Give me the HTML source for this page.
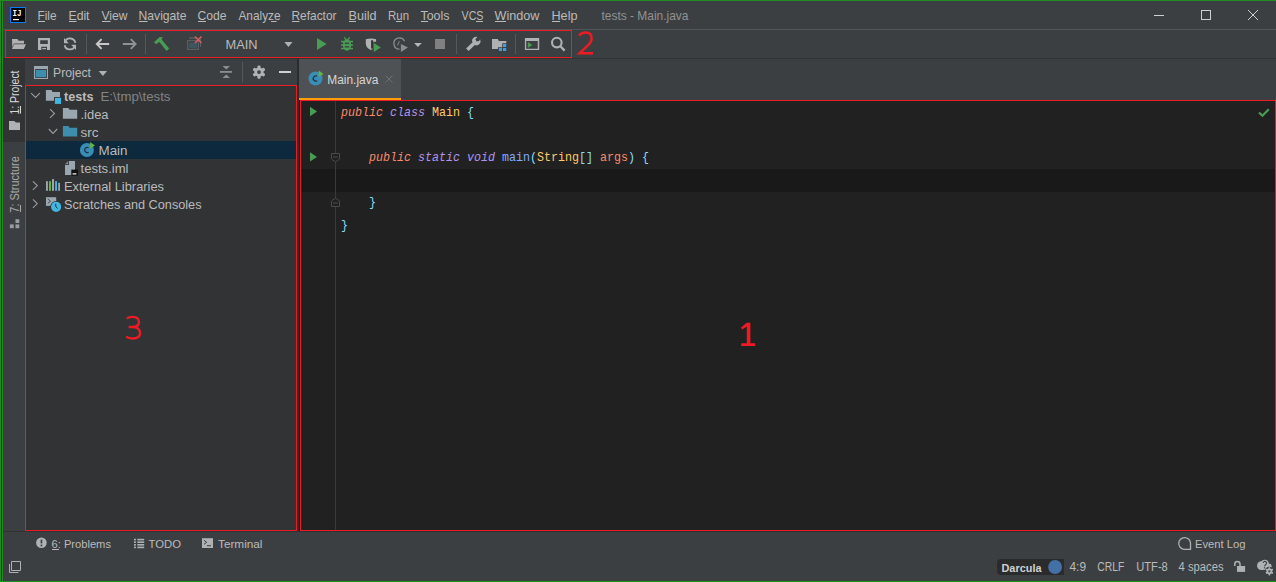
<!DOCTYPE html>
<html><head><meta charset="utf-8">
<style>
*{margin:0;padding:0;box-sizing:border-box}
html,body{width:1276px;height:582px;overflow:hidden;background:#3c3f41;font-family:"Liberation Sans",sans-serif}
.a{position:absolute}
svg{position:absolute;left:0;top:0}
</style></head><body>
<div class="a" style="left:0px;top:0px;width:1276px;height:1px;background:#228b22;"></div>
<div class="a" style="left:0px;top:581px;width:1276px;height:1px;background:#228b22;"></div>
<div class="a" style="left:0px;top:0px;width:1px;height:582px;background:#228b22;"></div>
<div class="a" style="left:1px;top:1px;width:1px;height:580px;background:#2f3133;"></div>
<div class="a" style="left:2px;top:0px;width:1px;height:582px;background:#228b22;"></div>
<div class="a" style="left:3px;top:29px;width:1273px;height:1px;background:#515658;"></div>
<div class="a" style="left:3px;top:58px;width:1273px;height:1px;background:#323232;"></div>
<div class="a" style="left:3px;top:59px;width:22px;height:472px;background:#3c3f41;"></div>
<div class="a" style="left:3px;top:59px;width:22px;height:83px;background:#313335;"></div>
<div class="a" style="left:25px;top:85px;width:272px;height:446px;background:#313335;"></div>
<div class="a" style="left:26px;top:141px;width:270px;height:18px;background:#0d293e;"></div>
<div class="a" style="left:297px;top:59px;width:2px;height:472px;background:#2b2b2b;"></div>
<div class="a" style="left:299px;top:59px;width:102px;height:39px;background:#4e5254;"></div>
<div class="a" style="left:299px;top:98px;width:102px;height:2px;background:#fc9d0a;"></div>
<div class="a" style="left:299px;top:100px;width:977px;height:431px;background:#212121;"></div>
<div class="a" style="left:300px;top:169px;width:976px;height:23px;background:#191919;"></div>
<div class="a" style="left:335px;top:100px;width:1px;height:431px;background:#3a3a3a;"></div>
<div class="a" style="left:3px;top:531px;width:1273px;height:1px;background:#323232;"></div>
<div class="a" style="left:997px;top:559px;width:67px;height:16px;background:#2b2b2b;border-radius:4px 0 0 4px"></div>
<svg width="1276" height="582" viewBox="0 0 1276 582">
<!-- IJ logo -->
<rect x="10" y="7" width="16" height="16" fill="#087cfa"/>
<rect x="11" y="8" width="14" height="14" fill="#000"/>
<text x="12.6" y="16.2" font-family="Liberation Mono" font-weight="bold" font-size="9" fill="#fff" textLength="9" lengthAdjust="spacingAndGlyphs">IJ</text>
<rect x="13" y="19" width="6" height="1.2" fill="#fff"/>
<!-- menu underlines -->
<g fill="#bbbbbb">
<rect x="38" y="21" width="7" height="1"/>
<rect x="69" y="21" width="7.5" height="1"/>
<rect x="102" y="21" width="8.5" height="1"/>
<rect x="139" y="21" width="8.5" height="1"/>
<rect x="198" y="21" width="8" height="1"/>
<rect x="271" y="21" width="5.5" height="1"/>
<rect x="292" y="21" width="7.5" height="1"/>
<rect x="349" y="21" width="7" height="1"/>
<rect x="396" y="21" width="6" height="1"/>
<rect x="421" y="21" width="7" height="1"/>
<rect x="476" y="21" width="7" height="1"/>
<rect x="495" y="21" width="11" height="1"/>
<rect x="552" y="21" width="8" height="1"/>
</g>
<!-- window controls -->
<g stroke="#cfcfcf" stroke-width="1" fill="none">
<line x1="1154" y1="15.5" x2="1164" y2="15.5"/>
<rect x="1201.5" y="10.5" width="9" height="9"/>
<line x1="1248" y1="10" x2="1258" y2="20"/>
<line x1="1258" y1="10" x2="1248" y2="20"/>
</g>
<!-- toolbar icons -->
<g fill="#afb1b3">
<!-- open folder -->
<path d="M12 39 H17.5 L18.5 40.8 H24 V43.5 H14 L12.3 47.5 Z"/>
<path d="M14.2 44.2 H26 L23.8 49 H12 Z"/>
<!-- save -->
<path fill-rule="evenodd" d="M38 38 H50 V50 H38 Z M40.2 40.2 V44 H47.8 V40.2 Z M41.3 46.7 V50 H47 V46.7 Z"/>
<rect x="42.3" y="48" width="3.8" height="1.2"/>
</g>
<!-- sync -->
<g fill="none" stroke="#afb1b3" stroke-width="1.8">
<path d="M65 42.3 A5.3 5.3 0 0 1 75.3 42.8"/>
<path d="M75 45.6 A5.3 5.3 0 0 1 64.7 45.2"/>
</g>
<g fill="#afb1b3">
<path d="M64 38 L64 43.2 L68.8 43.2 Z"/>
<path d="M76 50 L76 44.8 L71.2 44.8 Z"/>
</g>
<!-- separators -->
<g fill="#55585a">
<rect x="86" y="34" width="1" height="20"/>
<rect x="145" y="34" width="1" height="20"/>
<rect x="456" y="34" width="1" height="20"/>
<rect x="515" y="34" width="1" height="20"/>
<rect x="242" y="62" width="1" height="20"/>
</g>
<!-- back / forward -->
<g fill="none" stroke-width="1.9" stroke-linecap="butt">
<path d="M96.5 44 H109.2 M101.6 39.2 L96.8 44 L101.6 48.8" stroke="#c8c8c8"/>
<path d="M122.8 44 H135.5 M130.8 39.2 L135.6 44 L130.8 48.8" stroke="#8f9193"/>
</g>
<!-- hammer -->
<g fill="#499c54">
<path d="M154 42.3 L159.7 37 L163 37.2 L161.5 39.6 L163 41 L160.8 43.2 L159.2 41.7 L156.3 44.3 Z"/>
<path d="M159.2 41.7 L161.5 39.6 L169.2 48.4 L166.6 50.9 Z"/>
</g>
<!-- run config disabled -->
<g>
<rect x="187.6" y="40.6" width="10.8" height="8.8" fill="none" stroke="#5a5e60" stroke-width="1.2"/>
<rect x="189.2" y="42.6" width="7.7" height="5.3" fill="#3e5661"/>
<rect x="189" y="37.2" width="7" height="1.6" fill="#5a5e60"/>
<rect x="200" y="39" width="1" height="8" fill="#5a5e60"/>
<path d="M195 36.5 L201.5 43 M201.5 36.5 L195 43" stroke="#db5c5c" stroke-width="1.6"/>
</g>
<!-- MAIN dropdown -->
<path d="M284.4 42 H292.5 L288.45 47 Z" fill="#afb1b3"/>
<!-- run -->
<path d="M317 38 V50.1 L326.6 43.9 Z" fill="#499c54"/>
<!-- debug -->
<g fill="#499c54">
<ellipse cx="347" cy="45" rx="4.2" ry="5.8"/>
<rect x="341" y="40.8" width="12" height="1.5"/>
<rect x="341" y="44.3" width="12" height="1.5"/>
<rect x="341" y="47.8" width="12" height="1.5"/>
<path d="M344.3 37.3 L346.3 40 M349.7 37.3 L347.7 40" stroke="#499c54" stroke-width="1.3"/>
</g>
<g fill="#3c3f41">
<rect x="344.8" y="42.6" width="4.4" height="1.3"/>
<rect x="344.8" y="46.2" width="4.4" height="1.3"/>
</g>
<!-- coverage -->
<path d="M365.8 39.3 Q371 37.9 376.1 39.3 V41.8 H373.2 V48.4 Q372 49.4 370.8 50.1 Q365.8 47.8 365.8 43.6 Z" fill="#afb1b3"/>
<rect x="371.1" y="40.3" width="2" height="8.3" fill="#2e3033"/>
<path d="M373.8 43 V52 L380.8 47.4 Z" fill="#499c54"/>
<!-- profiler -->
<path d="M404.6 41.3 A5.6 5.6 0 1 0 399.5 49.2" fill="none" stroke="#8c8c8c" stroke-width="1.3"/>
<path d="M399.3 41.3 L397.6 45.3" stroke="#8c8c8c" stroke-width="1"/>
<path d="M400.9 44.1 V51.9 L408 47.6 Z" fill="#8c8c8c"/>
<path d="M414.1 42.9 H421.9 L417.9 46.9 Z" fill="#b5b5b5"/>
<!-- stop -->
<rect x="435" y="39" width="10" height="10" fill="#7f8183"/>
<!-- wrench -->
<g fill="#afb1b3">
<path d="M466.1 48.6 L472.8 41.9 L475.3 44.4 L468.6 51.1 Z"/>
<path fill-rule="evenodd" d="M472 41.2 A4.2 4.2 0 0 1 477.4 36.9 L475.3 39.3 L476.6 41.6 L479.1 40.9 L480.1 39.3 A4.2 4.2 0 0 1 474.9 45.1 Z"/>
</g>
<!-- project structure -->
<path d="M492 39 H497.8 L498.8 41 H506.3 V43.2 H502.2 V47.2 H498 V48.9 H492 Z" fill="#afb1b3"/>
<g fill="#3d9ee4">
<rect x="503" y="44" width="3.2" height="3"/>
<rect x="498.9" y="48" width="3.1" height="3"/>
<rect x="503" y="48" width="3.2" height="3"/>
</g>
<!-- terminal window -->
<path fill-rule="evenodd" d="M524.9 37.9 H539.2 V50.1 H524.9 Z M526.2 41 V48.8 H537.8 V41 Z" fill="#afb1b3"/>
<path d="M527.8 42 V47.9 L532.3 45 Z" fill="#499c54"/>
<!-- search -->
<circle cx="556.8" cy="42.6" r="4.8" fill="none" stroke="#afb1b3" stroke-width="2.1"/>
<path d="M560.4 46.3 L564.6 50.6" stroke="#afb1b3" stroke-width="2.3"/>

<!-- project header -->
<path fill-rule="evenodd" d="M34 66 H48 V79 H34 Z M35.2 69 V78 H47 V69 Z" fill="#9aa7b0"/>
<rect x="36" y="70" width="10.2" height="7.2" fill="#3d8ead"/>
<path d="M98.7 71 H107.1 L102.9 75.9 Z" fill="#afb1b3"/>
<!-- collapse all -->
<g fill="#8c8e90">
<path d="M222.5 66 H230 L226.25 69.5 Z"/>
<rect x="220" y="71" width="12" height="1.8"/>
<path d="M222.5 78 H230 L226.25 74.5 Z"/>
</g>
<!-- gear -->
<g fill="#afb1b3">
<circle cx="259" cy="72.1" r="4.6"/>
<rect x="257.4" y="65.5" width="3.2" height="13.2" rx="1.2"/>
<rect x="257.4" y="65.5" width="3.2" height="13.2" rx="1.2" transform="rotate(60 259 72.1)"/>
<rect x="257.4" y="65.5" width="3.2" height="13.2" rx="1.2" transform="rotate(120 259 72.1)"/>
</g>
<circle cx="259" cy="72.1" r="1.9" fill="#3c3f41"/>
<rect x="279" y="71" width="12" height="2" fill="#d0d0d0"/>

<!-- tree -->
<g fill="none" stroke="#9a9da0" stroke-width="1.1">
<path d="M31.1 93.1 L35.5 97.4 L39.9 93.1"/>
<path d="M50 109.2 L54.5 113.5 L50 117.8"/>
<path d="M48.8 129 L53 133.4 L57.2 129"/>
<path d="M32.9 181.4 L37.3 185.6 L32.9 189.8"/>
<path d="M32.9 199.4 L37.3 203.6 L32.9 207.8"/>
</g>
<!-- module folder -->
<path d="M45.9 90 H51.5 L52.5 91.9 H60 V97 H54 V100.8 H45.9 Z" fill="#9aa7b0"/>
<rect x="54.4" y="97.3" width="7.2" height="7.1" fill="#313335"/>
<rect x="54.9" y="97.8" width="6.2" height="6.1" fill="#40b6e0"/>
<!-- .idea folder -->
<path d="M62.9 108 H68.5 L69.5 109.8 H77.2 V118.8 H62.9 Z" fill="#9aa7b0"/>
<!-- src folder -->
<path d="M62.9 126 H68.5 L69.5 127.8 H77.2 V136.6 H62.9 Z" fill="#3d8ead"/>
<!-- Main class icon -->
<circle cx="86.9" cy="150" r="7" fill="#3a8db5"/>
<path d="M88.6 147.8 A2.6 2.6 0 1 0 88.6 152.2" fill="none" stroke="#1e3344" stroke-width="1.3"/>
<path d="M90.1 142.1 L95 145.5 L90.1 148.6 Z" fill="#62b543"/>
<!-- tests.iml -->
<path d="M69 161 H75 V175 H65 V165 H69 Z" fill="#9aa7b0"/>
<path d="M65 164.2 L68.2 161 V164.2 Z" fill="#9aa7b0" opacity="0.75"/>
<rect x="71.3" y="169.6" width="6.7" height="6.1" fill="#111"/>
<rect x="72.6" y="173.3" width="3.8" height="1.2" fill="#fff"/>
<!-- external libraries -->
<rect x="46" y="181.2" width="1.9" height="9.6" fill="#9aa7b0"/>
<rect x="49" y="181.2" width="2" height="9.6" fill="#62b543"/>
<rect x="52" y="179.1" width="2" height="11.7" fill="#9aa7b0"/>
<rect x="55.1" y="181.2" width="1.9" height="9.6" fill="#40b6e0"/>
<rect x="58.2" y="182.9" width="1.8" height="7.9" fill="#9aa7b0"/>
<!-- scratches -->
<rect x="46" y="197.2" width="10.2" height="8.7" fill="#9aa7b0"/>
<path d="M47.8 199 L50.5 201.2 L47.8 203.4" fill="none" stroke="#3c3f41" stroke-width="0.9"/>
<circle cx="56.1" cy="206.8" r="5.9" fill="#313335"/>
<circle cx="56.1" cy="206.8" r="5.1" fill="#40b6e0"/>
<path d="M55.6 203.8 L56 206.8 L57.6 208.6" fill="none" stroke="#1e3344" stroke-width="1"/>

<!-- editor tab icon -->
<circle cx="315.5" cy="78.5" r="7" fill="#3a8db5"/>
<path d="M317.2 76.3 A2.6 2.6 0 1 0 317.2 80.7" fill="none" stroke="#1e3344" stroke-width="1.3"/>
<path d="M318.7 70.6 L323.6 74 L318.7 77.1 Z" fill="#62b543"/>
<path d="M385.5 75.5 L392.5 82.5 M392.5 75.5 L385.5 82.5" stroke="#6e7173" stroke-width="1"/>

<!-- gutter -->
<g fill="#499c54">
<path d="M310 106.8 V116.2 L317 111.5 Z"/>
<path d="M310 152.2 V161.6 L317 156.9 Z"/>
</g>
<g fill="#212121" stroke="#4a4a4a" stroke-width="1">
<path d="M331.5 153.5 H339.5 V159 L335.5 162 L331.5 159 Z"/>
<path d="M331.5 206.5 H339.5 V201 L335.5 198 L331.5 201 Z"/>
</g>
<g stroke="#4a4a4a" stroke-width="1">
<line x1="333" y1="157" x2="338" y2="157"/>
<line x1="333" y1="203" x2="338" y2="203"/>
</g>
<!-- checkmark -->
<path d="M1259 112.5 L1262.4 115.8 L1268.8 109.2" fill="none" stroke="#499c54" stroke-width="2.2"/>

<!-- left strip vertical tabs -->
<text transform="translate(19.4 114.5) rotate(-90)" font-family="Liberation Sans" font-size="12" fill="#d8d8d8" textLength="44" lengthAdjust="spacingAndGlyphs">1: Project</text>
<rect x="20" y="106" width="1" height="7.5" fill="#d8d8d8"/>
<path d="M9 121 H14.3 L15.8 122.6 H20 V130 H9 Z" fill="#afb1b3"/>
<text transform="translate(19.2 212.7) rotate(-90)" font-family="Liberation Sans" font-size="12" fill="#a8a8a8" textLength="56.5" lengthAdjust="spacingAndGlyphs">7: Structure</text>
<rect x="20" y="205" width="1" height="7" fill="#a8a8a8"/>
<g fill="#9a9da0">
<rect x="15.5" y="219.2" width="3.8" height="3.8"/>
<rect x="9.9" y="224.4" width="3.8" height="3.8"/>
<rect x="15.5" y="224.4" width="3.8" height="3.8"/>
</g>

<!-- bottom bar icons -->
<circle cx="41.4" cy="542.8" r="5.3" fill="#afb1b3"/>
<rect x="40.6" y="539.6" width="1.7" height="3.8" fill="#3c3f41"/>
<rect x="40.6" y="544.6" width="1.7" height="1.7" fill="#3c3f41"/>
<rect x="52" y="549" width="7" height="1" fill="#bbbbbb"/>
<g fill="#afb1b3">
<rect x="134" y="538.8" width="1.9" height="1.6"/><rect x="137.3" y="538.8" width="6.9" height="1.6"/>
<rect x="134" y="541.4" width="1.9" height="1.6"/><rect x="137.3" y="541.4" width="6.9" height="1.6"/>
<rect x="134" y="544" width="1.9" height="1.6"/><rect x="137.3" y="544" width="6.9" height="1.6"/>
<rect x="134" y="546.6" width="1.9" height="1.6"/><rect x="137.3" y="546.6" width="6.9" height="1.6"/>
</g>
<rect x="202" y="538.2" width="11" height="9.8" fill="#afb1b3"/>
<path d="M204 540.3 L206.6 542.3 L204 544.3" fill="none" stroke="#3c3f41" stroke-width="1"/>
<rect x="207" y="545.2" width="4" height="1" fill="#3c3f41"/>
<path d="M1190.5 549.3 H1183.9 A5.9 5.9 0 1 1 1190.5 542.9 Z" fill="none" stroke="#afb1b3" stroke-width="1.3"/>

<!-- status bar -->
<path d="M9.5 564 V572.5 H18.5 M11.5 561.5 H20.5 V570.5 H11.5 Z" fill="none" stroke="#afb1b3" stroke-width="1"/>
<circle cx="1055.1" cy="567" r="6.9" fill="#4470a8"/>
<rect x="1237" y="566" width="8.1" height="5.9" fill="#afb1b3"/>
<path d="M1234.8 566 V564 A2.6 2.6 0 0 1 1240 564 V566" fill="none" stroke="#afb1b3" stroke-width="1.5"/>
<g fill="#afb1b3">
<circle cx="1261.3" cy="565.6" r="4.3"/>
<circle cx="1264.8" cy="563.6" r="3.9"/>
<circle cx="1268.6" cy="566.6" r="3.1"/>
<rect x="1261.3" y="566" width="8" height="3.9"/>
</g>
<path d="M1263.2 562.8 A1.7 1.7 0 1 1 1265.6 564.6 L1264.4 566.3" fill="none" stroke="#3c3f41" stroke-width="1.1"/>
<rect x="1263.9" y="567.2" width="1.2" height="1.2" fill="#3c3f41"/>
<circle cx="1269.4" cy="571.3" r="4.6" fill="#3c3f41"/>
<g fill="#afb1b3">
<circle cx="1269.4" cy="571.3" r="2.9"/>
<rect x="1268.5" y="567.2" width="1.8" height="8.2" rx="0.6"/>
<rect x="1268.5" y="567.2" width="1.8" height="8.2" rx="0.6" transform="rotate(60 1269.4 571.3)"/>
<rect x="1268.5" y="567.2" width="1.8" height="8.2" rx="0.6" transform="rotate(120 1269.4 571.3)"/>
</g>
<circle cx="1269.4" cy="571.3" r="1.1" fill="#3c3f41"/>

<text x="37.5" y="20" font-family="Liberation Sans" font-size="13" fill="#bbbbbb" font-weight="normal" font-style="normal" textLength="19" lengthAdjust="spacingAndGlyphs" >File</text>
<text x="68.5" y="20" font-family="Liberation Sans" font-size="13" fill="#bbbbbb" font-weight="normal" font-style="normal" textLength="21" lengthAdjust="spacingAndGlyphs" >Edit</text>
<text x="101.5" y="20" font-family="Liberation Sans" font-size="13" fill="#bbbbbb" font-weight="normal" font-style="normal" textLength="26" lengthAdjust="spacingAndGlyphs" >View</text>
<text x="138.5" y="20" font-family="Liberation Sans" font-size="13" fill="#bbbbbb" font-weight="normal" font-style="normal" textLength="48" lengthAdjust="spacingAndGlyphs" >Navigate</text>
<text x="197.5" y="20" font-family="Liberation Sans" font-size="13" fill="#bbbbbb" font-weight="normal" font-style="normal" textLength="29" lengthAdjust="spacingAndGlyphs" >Code</text>
<text x="238.5" y="20" font-family="Liberation Sans" font-size="13" fill="#bbbbbb" font-weight="normal" font-style="normal" textLength="42" lengthAdjust="spacingAndGlyphs" >Analyze</text>
<text x="291.5" y="20" font-family="Liberation Sans" font-size="13" fill="#bbbbbb" font-weight="normal" font-style="normal" textLength="45" lengthAdjust="spacingAndGlyphs" >Refactor</text>
<text x="348.5" y="20" font-family="Liberation Sans" font-size="13" fill="#bbbbbb" font-weight="normal" font-style="normal" textLength="28" lengthAdjust="spacingAndGlyphs" >Build</text>
<text x="388.1" y="20" font-family="Liberation Sans" font-size="13" fill="#bbbbbb" font-weight="normal" font-style="normal" textLength="21" lengthAdjust="spacingAndGlyphs" >Run</text>
<text x="420.5" y="20" font-family="Liberation Sans" font-size="13" fill="#bbbbbb" font-weight="normal" font-style="normal" textLength="29" lengthAdjust="spacingAndGlyphs" >Tools</text>
<text x="461.5" y="20" font-family="Liberation Sans" font-size="13" fill="#bbbbbb" font-weight="normal" font-style="normal" textLength="22" lengthAdjust="spacingAndGlyphs" >VCS</text>
<text x="494.5" y="20" font-family="Liberation Sans" font-size="13" fill="#bbbbbb" font-weight="normal" font-style="normal" textLength="45" lengthAdjust="spacingAndGlyphs" >Window</text>
<text x="551.5" y="20" font-family="Liberation Sans" font-size="13" fill="#bbbbbb" font-weight="normal" font-style="normal" textLength="26" lengthAdjust="spacingAndGlyphs" >Help</text>
<text x="601.5" y="20" font-family="Liberation Sans" font-size="13" fill="#8f9193" font-weight="normal" font-style="normal" textLength="87" lengthAdjust="spacingAndGlyphs" >tests - Main.java</text>
<text x="225.5" y="49" font-family="Liberation Sans" font-size="12.5" fill="#bbbbbb" font-weight="normal" font-style="normal" textLength="32" lengthAdjust="spacingAndGlyphs" >MAIN</text>
<text x="53" y="77" font-family="Liberation Sans" font-size="12.5" fill="#bbbbbb" font-weight="normal" font-style="normal" textLength="38" lengthAdjust="spacingAndGlyphs" >Project</text>
<text x="64" y="100.6" font-family="Liberation Sans" font-size="12.5" fill="#bbbbbb" font-weight="bold" font-style="normal" textLength="29.5" lengthAdjust="spacingAndGlyphs" >tests</text>
<text x="100.5" y="100.6" font-family="Liberation Sans" font-size="12.5" fill="#828486" font-weight="normal" font-style="normal" textLength="70" lengthAdjust="spacingAndGlyphs" >E:\tmp\tests</text>
<text x="80.5" y="118.7" font-family="Liberation Sans" font-size="12.5" fill="#bbbbbb" font-weight="normal" font-style="normal" textLength="28" lengthAdjust="spacingAndGlyphs" >.idea</text>
<text x="80.5" y="136.7" font-family="Liberation Sans" font-size="12.5" fill="#bbbbbb" font-weight="normal" font-style="normal" textLength="18" lengthAdjust="spacingAndGlyphs" >src</text>
<text x="98.5" y="154.8" font-family="Liberation Sans" font-size="12.5" fill="#bbbbbb" font-weight="normal" font-style="normal" textLength="29" lengthAdjust="spacingAndGlyphs" >Main</text>
<text x="80.5" y="172.8" font-family="Liberation Sans" font-size="12.5" fill="#bbbbbb" font-weight="normal" font-style="normal" textLength="48" lengthAdjust="spacingAndGlyphs" >tests.iml</text>
<text x="64" y="190.8" font-family="Liberation Sans" font-size="12.5" fill="#bbbbbb" font-weight="normal" font-style="normal" textLength="100" lengthAdjust="spacingAndGlyphs" >External Libraries</text>
<text x="64" y="208.8" font-family="Liberation Sans" font-size="12.5" fill="#bbbbbb" font-weight="normal" font-style="normal" textLength="137.5" lengthAdjust="spacingAndGlyphs" >Scratches and Consoles</text>
<text x="327.3" y="83.7" font-family="Liberation Sans" font-size="12.5" fill="#d6d6d6" font-weight="normal" font-style="normal" textLength="51" lengthAdjust="spacingAndGlyphs" >Main.java</text>
<text x="341.0" y="116.0" font-family="Liberation Mono" font-size="12.8" fill="#f78c6c" font-weight="normal" font-style="italic" textLength="42.0" lengthAdjust="spacingAndGlyphs" >public</text>
<text x="383.0" y="116.0" font-family="Liberation Mono" font-size="12.8" fill="#f78c6c" font-weight="normal" font-style="normal" textLength="7.0" lengthAdjust="spacingAndGlyphs" > </text>
<text x="390.0" y="116.0" font-family="Liberation Mono" font-size="12.8" fill="#b294f0" font-weight="normal" font-style="italic" textLength="35.0" lengthAdjust="spacingAndGlyphs" >class</text>
<text x="425.0" y="116.0" font-family="Liberation Mono" font-size="12.8" fill="#f78c6c" font-weight="normal" font-style="normal" textLength="7.0" lengthAdjust="spacingAndGlyphs" > </text>
<text x="432.0" y="116.0" font-family="Liberation Mono" font-size="12.8" fill="#ffcb6b" font-weight="normal" font-style="normal" textLength="28.0" lengthAdjust="spacingAndGlyphs" >Main</text>
<text x="460.0" y="116.0" font-family="Liberation Mono" font-size="12.8" fill="#f78c6c" font-weight="normal" font-style="normal" textLength="7.0" lengthAdjust="spacingAndGlyphs" > </text>
<text x="467.0" y="116.0" font-family="Liberation Mono" font-size="12.8" fill="#89ddff" font-weight="normal" font-style="normal" textLength="7.0" lengthAdjust="spacingAndGlyphs" >{</text>
<text x="369.0" y="161.2" font-family="Liberation Mono" font-size="12.8" fill="#f78c6c" font-weight="normal" font-style="italic" textLength="42.0" lengthAdjust="spacingAndGlyphs" >public</text>
<text x="411.0" y="161.2" font-family="Liberation Mono" font-size="12.8" fill="#f78c6c" font-weight="normal" font-style="normal" textLength="7.0" lengthAdjust="spacingAndGlyphs" > </text>
<text x="418.0" y="161.2" font-family="Liberation Mono" font-size="12.8" fill="#b294f0" font-weight="normal" font-style="italic" textLength="42.0" lengthAdjust="spacingAndGlyphs" >static</text>
<text x="460.0" y="161.2" font-family="Liberation Mono" font-size="12.8" fill="#f78c6c" font-weight="normal" font-style="normal" textLength="7.0" lengthAdjust="spacingAndGlyphs" > </text>
<text x="467.0" y="161.2" font-family="Liberation Mono" font-size="12.8" fill="#b294f0" font-weight="normal" font-style="italic" textLength="28.0" lengthAdjust="spacingAndGlyphs" >void</text>
<text x="495.0" y="161.2" font-family="Liberation Mono" font-size="12.8" fill="#f78c6c" font-weight="normal" font-style="normal" textLength="7.0" lengthAdjust="spacingAndGlyphs" > </text>
<text x="502.0" y="161.2" font-family="Liberation Mono" font-size="12.8" fill="#82aaff" font-weight="normal" font-style="normal" textLength="28.0" lengthAdjust="spacingAndGlyphs" >main</text>
<text x="530.0" y="161.2" font-family="Liberation Mono" font-size="12.8" fill="#89ddff" font-weight="normal" font-style="normal" textLength="7.0" lengthAdjust="spacingAndGlyphs" >(</text>
<text x="537.0" y="161.2" font-family="Liberation Mono" font-size="12.8" fill="#ffcb6b" font-weight="normal" font-style="normal" textLength="42.0" lengthAdjust="spacingAndGlyphs" >String</text>
<text x="579.0" y="161.2" font-family="Liberation Mono" font-size="12.8" fill="#89ddff" font-weight="normal" font-style="normal" textLength="14.0" lengthAdjust="spacingAndGlyphs" >[]</text>
<text x="593.0" y="161.2" font-family="Liberation Mono" font-size="12.8" fill="#f78c6c" font-weight="normal" font-style="normal" textLength="7.0" lengthAdjust="spacingAndGlyphs" > </text>
<text x="600.0" y="161.2" font-family="Liberation Mono" font-size="12.8" fill="#f78c6c" font-weight="normal" font-style="normal" textLength="28.0" lengthAdjust="spacingAndGlyphs" >args</text>
<text x="628.0" y="161.2" font-family="Liberation Mono" font-size="12.8" fill="#89ddff" font-weight="normal" font-style="normal" textLength="7.0" lengthAdjust="spacingAndGlyphs" >)</text>
<text x="635.0" y="161.2" font-family="Liberation Mono" font-size="12.8" fill="#f78c6c" font-weight="normal" font-style="normal" textLength="7.0" lengthAdjust="spacingAndGlyphs" > </text>
<text x="642.0" y="161.2" font-family="Liberation Mono" font-size="12.8" fill="#89ddff" font-weight="normal" font-style="normal" textLength="7.0" lengthAdjust="spacingAndGlyphs" >{</text>
<text x="369.0" y="206.4" font-family="Liberation Mono" font-size="12.8" fill="#89ddff" font-weight="normal" font-style="normal" textLength="7.0" lengthAdjust="spacingAndGlyphs" >}</text>
<text x="341.0" y="229.0" font-family="Liberation Mono" font-size="12.8" fill="#89ddff" font-weight="normal" font-style="normal" textLength="7.0" lengthAdjust="spacingAndGlyphs" >}</text>
<text x="51.5" y="547.8" font-family="Liberation Sans" font-size="11" fill="#bbbbbb" font-weight="normal" font-style="normal" textLength="59.5" lengthAdjust="spacingAndGlyphs" >6: Problems</text>
<text x="148.5" y="547.8" font-family="Liberation Sans" font-size="11" fill="#bbbbbb" font-weight="normal" font-style="normal" textLength="32.5" lengthAdjust="spacingAndGlyphs" >TODO</text>
<text x="218" y="547.8" font-family="Liberation Sans" font-size="11" fill="#bbbbbb" font-weight="normal" font-style="normal" textLength="44.5" lengthAdjust="spacingAndGlyphs" >Terminal</text>
<text x="1195" y="547.8" font-family="Liberation Sans" font-size="11" fill="#bbbbbb" font-weight="normal" font-style="normal" textLength="50.5" lengthAdjust="spacingAndGlyphs" >Event Log</text>
<text x="1001.5" y="571.6" font-family="Liberation Sans" font-size="11.5" fill="#d0d0d0" font-weight="bold" font-style="normal" textLength="40" lengthAdjust="spacingAndGlyphs" >Darcula</text>
<text x="1069.5" y="571" font-family="Liberation Sans" font-size="12" fill="#bbbbbb" font-weight="normal" font-style="normal" textLength="16.5" lengthAdjust="spacingAndGlyphs" >4:9</text>
<text x="1097.3" y="571" font-family="Liberation Sans" font-size="12" fill="#bbbbbb" font-weight="normal" font-style="normal" textLength="27" lengthAdjust="spacingAndGlyphs" >CRLF</text>
<text x="1136.3" y="571" font-family="Liberation Sans" font-size="12" fill="#bbbbbb" font-weight="normal" font-style="normal" textLength="31.5" lengthAdjust="spacingAndGlyphs" >UTF-8</text>
<text x="1178.6" y="571" font-family="Liberation Sans" font-size="12" fill="#bbbbbb" font-weight="normal" font-style="normal" textLength="45" lengthAdjust="spacingAndGlyphs" >4 spaces</text>
<path d="M579.2 35.6 C580.6 33.4 582.8 32.4 585.6 32.4 C589.6 32.4 591.6 35 591.6 38.4 C591.6 41.6 589.8 43.8 586.6 46.6 L579.6 53.2 H593" fill="none" stroke="#ed1c24" stroke-width="2.5"/>
<path d="M126.8 318.6 C128.5 317.2 130.5 316.9 132.5 316.9 C136.5 316.9 138.9 318.9 138.9 322 C138.9 325.2 136.4 327 132.5 327 H128.6 M132.5 327 C137.3 327 140.1 329.5 140.1 333 C140.1 336.5 137 338.5 132.5 338.5 C130 338.5 128 338 126.2 336.6" fill="none" stroke="#ed1c24" stroke-width="2.4"/>
<path d="M746.8 322.8 H750.4 V343.2 H755.2 V346 H741.2 V343.2 H746.8 V326.6 L742.2 329.4 L741 327.4 Z" fill="#ed1c24"/>
</svg>
<div class="a" style="left:5px;top:30px;width:567px;height:28px;border:1px solid #ed1c24"></div>
<div class="a" style="left:25px;top:85px;width:272px;height:446px;border:1px solid #ed1c24"></div>
<div class="a" style="left:300px;top:100px;width:976px;height:431px;border:1px solid #ed1c24"></div>
</body></html>
